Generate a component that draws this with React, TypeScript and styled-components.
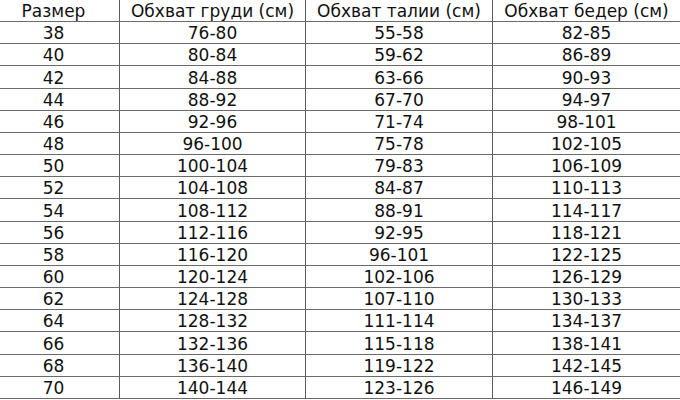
import styled, { createGlobalStyle } from "styled-components";

const GlobalStyle = createGlobalStyle`
  html, body {
    margin: 0;
    padding: 0;
    background: #fff;
  }
`;

const Table = styled.div`
  display: grid;
  grid-template-columns: 120px 186px 187px 187px;
  grid-template-rows: repeat(18, 1fr);
  width: 680px;
  height: 399px;
  font-family: "DejaVu Sans", Verdana, sans-serif;
  font-size: 17px;
  color: #111;
  background: #fff;
`;

const Cell = styled.div<{ $first?: boolean; $last?: boolean }>`
  display: flex;
  align-items: center;
  justify-content: center;
  border-bottom: 1px solid #6a6a6a;
  border-right: ${(p) => (p.$last ? "none" : "1px solid #5a5a5a")};
  padding-right: ${(p) => (p.$first ? "12px" : "0")};
  padding-top: 1px;
  white-space: nowrap;
  box-sizing: border-box;
`;

const header = ["Размер", "Обхват груди (см)", "Обхват талии (см)", "Обхват бедер (см)"];

const rows: string[][] = [
  ["38", "76-80", "55-58", "82-85"],
  ["40", "80-84", "59-62", "86-89"],
  ["42", "84-88", "63-66", "90-93"],
  ["44", "88-92", "67-70", "94-97"],
  ["46", "92-96", "71-74", "98-101"],
  ["48", "96-100", "75-78", "102-105"],
  ["50", "100-104", "79-83", "106-109"],
  ["52", "104-108", "84-87", "110-113"],
  ["54", "108-112", "88-91", "114-117"],
  ["56", "112-116", "92-95", "118-121"],
  ["58", "116-120", "96-101", "122-125"],
  ["60", "120-124", "102-106", "126-129"],
  ["62", "124-128", "107-110", "130-133"],
  ["64", "128-132", "111-114", "134-137"],
  ["66", "132-136", "115-118", "138-141"],
  ["68", "136-140", "119-122", "142-145"],
  ["70", "140-144", "123-126", "146-149"],
];

function App() {
  return (
    <>
      <GlobalStyle />
      <Table>
        {[header, ...rows].map((row, r) =>
          row.map((text, c) => (
            <Cell key={`${r}-${c}`} $first={c === 0} $last={c === 3}>
              {text}
            </Cell>
          ))
        )}
      </Table>
    </>
  );
}

export default App;
